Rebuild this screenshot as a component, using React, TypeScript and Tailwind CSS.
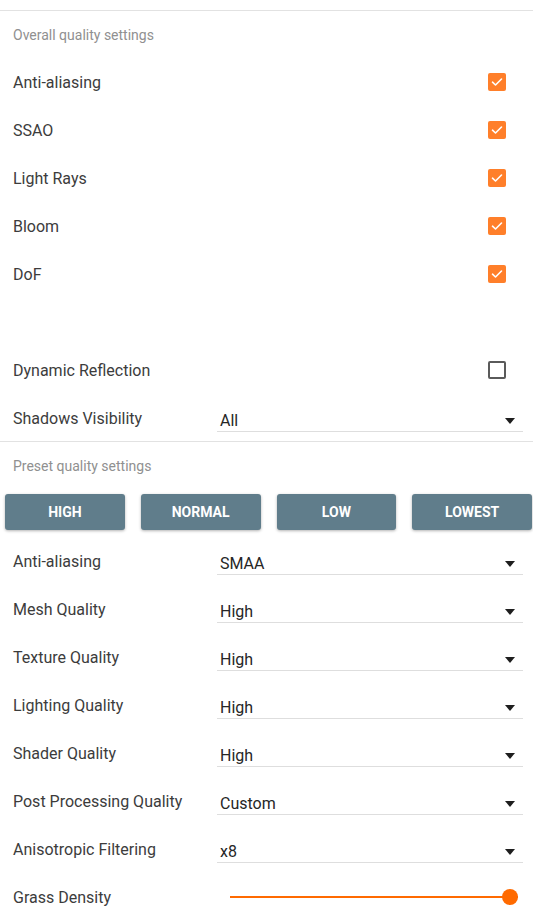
import React from "react";

function Check({ on }: { on: boolean }) {
  if (!on) {
    return <div className="w-[18px] h-[18px] rounded-[2px] border-2 border-[#5a5a5a] bg-white" />;
  }
  return (
    <div className="w-[18px] h-[18px] rounded-[2px] bg-[#ff7f2a] flex items-center justify-center">
      <svg width="12" height="10" viewBox="0 0 12 10" fill="none">
        <path d="M1.5 5.2 L4.5 8 L10.5 2" stroke="#fff" strokeWidth="1.6" strokeLinecap="round" strokeLinejoin="round" />
      </svg>
    </div>
  );
}

function Select({ value }: { value: string }) {
  return (
    <div className="flex-1 mr-[10px] self-start mt-[17px] h-[21px] border-b border-[#dedede] flex items-center justify-between pl-[3px] pr-[8px] text-[16px] text-[#262626]">
      <span>{value}</span>
      <svg width="10" height="6" viewBox="0 0 10 6">
        <path d="M0 0 L10 0 L5 6 Z" fill="#1e1e1e" />
      </svg>
    </div>
  );
}

function Row({ label, children }: { label: string; children?: React.ReactNode }) {
  return (
    <div className="h-[48px] flex items-center">
      <div className="w-[217px] pl-[13px] pt-[2px] text-[16px] text-[#3c3c3c]">{label}</div>
      {children}
    </div>
  );
}

function CheckRow({ label, on }: { label: string; on: boolean }) {
  return (
    <div className="h-[48px] flex items-center justify-between pl-[13px] pr-[27px]">
      <span className="text-[16px] text-[#3c3c3c] pt-[2px]">{label}</span>
      <Check on={on} />
    </div>
  );
}

function Header({ title }: { title: string }) {
  return (
    <div className="h-[47px] flex items-center pl-[13px] pt-[1px] text-[14px] text-[#909090]">{title}</div>
  );
}

export default function App() {
  const presets = ["HIGH", "NORMAL", "LOW", "LOWEST"];
  const selects: [string, string][] = [
    ["Anti-aliasing", "SMAA"],
    ["Mesh Quality", "High"],
    ["Texture Quality", "High"],
    ["Lighting Quality", "High"],
    ["Shader Quality", "High"],
    ["Post Processing Quality", "Custom"],
    ["Anisotropic Filtering", "x8"],
  ];
  return (
    <div className="w-[533px] h-[911px] overflow-hidden bg-white pt-[10px]" style={{ fontFamily: "Roboto, 'Noto Sans', sans-serif" }}>
      <div className="border-t border-[#e2e2e2]">
        <Header title="Overall quality settings" />
        <CheckRow label="Anti-aliasing" on />
        <CheckRow label="SSAO" on />
        <CheckRow label="Light Rays" on />
        <CheckRow label="Bloom" on />
        <CheckRow label="DoF" on />
        <div className="h-[48px]" />
        <CheckRow label="Dynamic Reflection" on={false} />
        <div className="h-[47px] flex items-center">
          <div className="w-[217px] pl-[13px] pt-[2px] text-[16px] text-[#3c3c3c]">Shadows Visibility</div>
          <Select value="All" />
        </div>
      </div>
      <div className="border-t border-[#e2e2e2]">
        <Header title="Preset quality settings" />
        <div className="grid grid-cols-4 gap-4 pl-[5px] pr-[1px] mt-[5px] mb-[7px]">
          {presets.map((p) => (
            <button
              key={p}
              className="h-[36px] rounded-[3px] bg-[#607d8b] text-white text-[14px] font-bold shadow-[0_1px_3px_rgba(0,0,0,0.3)]"
            >
              {p}
            </button>
          ))}
        </div>
        {selects.map(([l, v]) => (
          <Row key={l} label={l}>
            <Select value={v} />
          </Row>
        ))}
        <Row label="Grass Density">
          <div className="flex-1 ml-[13px] mr-[15px] relative h-[16px] flex items-center">
            <div className="w-full h-[2px] bg-[#ff6a00]" />
            <div className="absolute right-0 top-0 w-[16px] h-[16px] rounded-full bg-[#ff6a00]" />
          </div>
        </Row>
      </div>
    </div>
  );
}
